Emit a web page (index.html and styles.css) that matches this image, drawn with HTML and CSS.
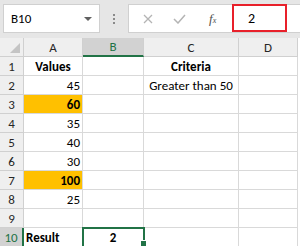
FILE: index.html
```html
<!DOCTYPE html>
<html>
<head>
    <link rel="stylesheet" href="styles.css">
</head>
<body>
    <div class="excel">
        <div class="formula-bar">
            <div class="name-box">
                <span>B10</span>
                <span class="caret"></span>
            </div>
            <div class="dots"><i></i><i></i><i></i></div>
            <div class="formula">
                <div class="fx-buttons">
                    <svg class="btn-x" width="10" height="10" viewBox="0 0 10 10">
                        <path d="M1 1 L9 9 M9 1 L1 9" stroke="#b4b4b4" stroke-width="1.3" fill="none"/>
                    </svg>
                    <svg class="btn-check" width="13" height="10" viewBox="0 0 13 10">
                        <path d="M1 5 L5 9 L12 1" stroke="#b4b4b4" stroke-width="1.5" fill="none"/>
                    </svg>
                    <span class="fx">f<sub>x</sub></span>
                </div>
                <div class="formula-input">2</div>
            </div>
        </div>
        <div class="sheet">
            <div class="corner"><span class="tri"></span></div>
            <div class="col-head">A</div>
            <div class="col-head active">B</div>
            <div class="col-head">C</div>
            <div class="col-head">D</div>

            <div class="row-head">1</div>
            <div class="cell center bold">Values</div>
            <div class="cell"></div>
            <div class="cell center bold">Criteria</div>
            <div class="cell"></div>

            <div class="row-head">2</div>
            <div class="cell num">45</div>
            <div class="cell"></div>
            <div class="cell center">Greater than 50</div>
            <div class="cell"></div>

            <div class="row-head">3</div>
            <div class="cell num bold hi">60</div>
            <div class="cell"></div>
            <div class="cell"></div>
            <div class="cell"></div>

            <div class="row-head">4</div>
            <div class="cell num">35</div>
            <div class="cell"></div>
            <div class="cell"></div>
            <div class="cell"></div>

            <div class="row-head">5</div>
            <div class="cell num">40</div>
            <div class="cell"></div>
            <div class="cell"></div>
            <div class="cell"></div>

            <div class="row-head">6</div>
            <div class="cell num">30</div>
            <div class="cell"></div>
            <div class="cell"></div>
            <div class="cell"></div>

            <div class="row-head">7</div>
            <div class="cell num bold hi">100</div>
            <div class="cell"></div>
            <div class="cell"></div>
            <div class="cell"></div>

            <div class="row-head">8</div>
            <div class="cell num">25</div>
            <div class="cell"></div>
            <div class="cell"></div>
            <div class="cell"></div>

            <div class="row-head">9</div>
            <div class="cell"></div>
            <div class="cell"></div>
            <div class="cell"></div>
            <div class="cell"></div>

            <div class="row-head active">10</div>
            <div class="cell bold">Result</div>
            <div class="cell center bold selected">2</div>
            <div class="cell"></div>
            <div class="cell"></div>
        </div>
    </div>
</body>
</html>
```

FILE: styles.css
```css
body {
    margin: 0;
    padding: 0;
    background: #ffffff;
    font-family: Carlito, 'Liberation Sans', Arial, sans-serif;
    font-size: 12px;
    color: #000000;
}

.excel {
    width: 300px;
    height: 246px;
    overflow: hidden;
    background: #e6e6e6;
}

/* formula bar */

.formula-bar {
    height: 38px;
    display: flex;
    align-items: flex-start;
    padding: 4px 0 0 3px;
    box-sizing: border-box;
}

.name-box {
    width: 97px;
    height: 29px;
    box-sizing: border-box;
    background: #ffffff;
    border: 1px solid #d0d0d0;
    display: flex;
    align-items: center;
    justify-content: space-between;
    padding: 0 7px 0 7px;
    font-size: 13px;
}

.caret {
    width: 0;
    height: 0;
    border-left: 4px solid transparent;
    border-right: 4px solid transparent;
    border-top: 4px solid #606060;
}

.dots {
    width: 28px;
    height: 29px;
    display: flex;
    flex-direction: column;
    align-items: center;
    justify-content: center;
    gap: 2px;
}

.dots i {
    width: 2px;
    height: 2px;
    background: #8a8a8a;
}

.formula {
    flex: 1;
    height: 29px;
    box-sizing: border-box;
    background: #ffffff;
    border: 1px solid #d0d0d0;
    border-right: none;
    display: flex;
    align-items: center;
}

.fx-buttons {
    width: 103px;
    display: flex;
    align-items: center;
}

.btn-x {
    margin-left: 14px;
}

.btn-check {
    margin-left: 20px;
}

.fx {
    margin-left: 23px;
    font-family: 'Liberation Serif', serif;
    font-style: italic;
    font-size: 13px;
    color: #505050;
}

.fx sub {
    font-size: 8px;
    vertical-align: baseline;
}

.formula-input {
    width: 55px;
    height: 28px;
    box-sizing: border-box;
    border: 2px solid #e8202a;
    margin-top: -1px;
    padding-left: 14px;
    display: flex;
    align-items: center;
    font-size: 14px;
}

/* sheet */

.sheet {
    display: grid;
    grid-template-columns: 24px 59px 61px 95px 59px;
    grid-auto-rows: 19px;
    background: #ffffff;
}

.corner,
.col-head,
.row-head {
    background: #efefef;
    border-right: 1px solid #d0d0d0;
    border-bottom: 1px solid #d0d0d0;
    box-sizing: border-box;
    display: flex;
    align-items: center;
    justify-content: center;
    font-size: 13px;
    color: #262626;
}

.corner {
    position: relative;
}

.tri {
    position: absolute;
    right: 3px;
    bottom: 3px;
    width: 0;
    height: 0;
    border-left: 10px solid transparent;
    border-bottom: 10px solid #c4c4c4;
}

.col-head.active {
    background: #d2d2d2;
    color: #217346;
    border-bottom: 2px solid #217346;
}

.row-head.active {
    background: #d2d2d2;
    color: #217346;
    border-right: 2px solid #217346;
}

.cell {
    border-right: 1px solid #d9d9d9;
    border-bottom: 1px solid #d9d9d9;
    box-sizing: border-box;
    display: flex;
    align-items: center;
    padding: 0 2px;
    font-size: 13px;
    white-space: nowrap;
}

.center {
    justify-content: center;
}

.num {
    justify-content: flex-end;
}

.bold {
    font-weight: bold;
}

.hi {
    background: #ffc000;
}

.selected {
    position: relative;
    outline: 2px solid #217346;
    outline-offset: -1px;
}

.selected::after {
    content: '';
    position: absolute;
    right: -4px;
    bottom: -1px;
    width: 5px;
    height: 5px;
    background: #217346;
    border: 1px solid #ffffff;
}
```
